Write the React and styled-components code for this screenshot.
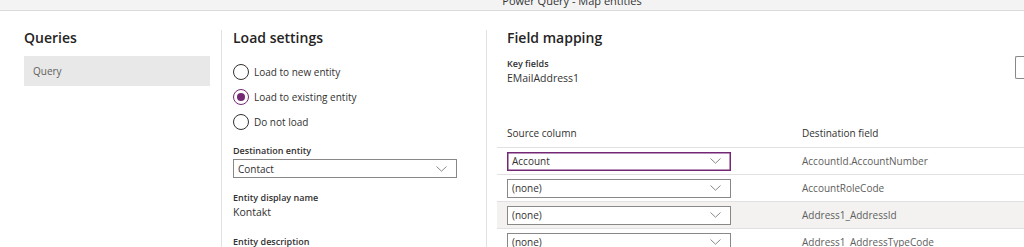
import React from "react";
import styled, { createGlobalStyle } from "styled-components";

const purple = "#742774";

const mappings = [
  { id: 1, source: "Account", dest: "AccountId.AccountNumber", active: true },
  { id: 2, source: "(none)", dest: "AccountRoleCode" },
  { id: 3, source: "(none)", dest: "Address1_AddressId", shaded: true },
  { id: 4, source: "(none)", dest: "Address1_AddressTypeCode" },
];

const loadOptions = [
  { id: 1, label: "Load to new entity" },
  { id: 2, label: "Load to existing entity", checked: true },
  { id: 3, label: "Do not load" },
];

function Chevron() {
  return (
    <svg width="11" height="6" viewBox="0 0 11 6">
      <path d="M0.5 0.5 L5.5 5.2 L10.5 0.5" fill="none" stroke="#8a8886" strokeWidth="1" />
    </svg>
  );
}

export default function App() {
  return (
    <>
      <GlobalStyle />
      <Window>
        <TitleBar>
          <TitleText>Power Query - Map entities</TitleText>
        </TitleBar>
        <Body>
          <QueriesPane>
            <Heading>Queries</Heading>
            <QueryItem>Query</QueryItem>
          </QueriesPane>

          <SettingsPane>
            <Heading>Load settings</Heading>
            <Radios>
              {loadOptions.map((o) => (
                <RadioRow key={o.id}>
                  <RadioCircle $checked={o.checked} />
                  <RadioLabel>{o.label}</RadioLabel>
                </RadioRow>
              ))}
            </Radios>
            <Field $top="14px">
              <FieldLabel>Destination entity</FieldLabel>
              <Select $width="224px">
                <span>Contact</span>
                <Chevron />
              </Select>
            </Field>
            <Field $top="13px" $gap="0px">
              <FieldLabel>Entity display name</FieldLabel>
              <FieldValue>Kontakt</FieldValue>
            </Field>
            <Field $top="15px">
              <FieldLabel>Entity description</FieldLabel>
            </Field>
          </SettingsPane>

          <MappingPane>
            <Heading>Field mapping</Heading>
            <KeyBlock>
              <div>
                <FieldLabel>Key fields</FieldLabel>
                <FieldValue>EMailAddress1</FieldValue>
              </div>
              <EdgeButton />
            </KeyBlock>
            <Table>
              <HeaderRow>
                <HeaderCell>Source column</HeaderCell>
                <HeaderCell>Destination field</HeaderCell>
              </HeaderRow>
              {mappings.map((m) => (
                <Row key={m.id} $shaded={m.shaded}>
                  <Cell>
                    <Select $width="224px" $active={m.active}>
                      <span>{m.source}</span>
                      <Chevron />
                    </Select>
                  </Cell>
                  <DestCell>{m.dest}</DestCell>
                </Row>
              ))}
            </Table>
          </MappingPane>
        </Body>
      </Window>
    </>
  );
}

const GlobalStyle = createGlobalStyle`
  html, body {
    margin: 0;
    padding: 0;
    background: #ffffff;
    font-family: "Open Sans", "Noto Sans", sans-serif;
    color: #323130;
    overflow: hidden;
  }
  * { box-sizing: border-box; }
`;

const Window = styled.div`
  width: 1024px;
  height: 247px;
  overflow: hidden;
  display: flex;
  flex-direction: column;
`;

const TitleBar = styled.div`
  height: 11px;
  flex: none;
  background: #f3f3f3;
  border-bottom: 1px solid #dcdcdc;
  overflow: hidden;
  display: flex;
  justify-content: center;
  padding-left: 120px;
`;

const TitleText = styled.div`
  font-size: 11px;
  line-height: 11px;
  margin-top: -5px;
  color: #333;
`;

const Body = styled.div`
  flex: 1;
  display: grid;
  grid-template-columns: 221px 265px 1fr;
  padding-top: 19px;
`;

const Heading = styled.h2`
  margin: 0;
  font-size: 14px;
  line-height: 16px;
  font-weight: 600;
  color: #252423;
`;

const QueriesPane = styled.div`
  padding: 0 11px 0 24px;
`;

const QueryItem = styled.div`
  margin-top: 10px;
  height: 30px;
  background: #e8e8e8;
  padding-left: 9px;
  display: flex;
  align-items: center;
  font-size: 10px;
  color: #605e5c;
`;

const SettingsPane = styled.div`
  border-left: 1px solid #e1e1e1;
  padding-left: 11px;
`;

const Radios = styled.div`
  margin-top: 18px;
  display: flex;
  flex-direction: column;
  gap: 9px;
`;

const RadioRow = styled.div`
  display: flex;
  align-items: center;
  gap: 5px;
  height: 16px;
`;

const RadioCircle = styled.span`
  width: 16px;
  height: 16px;
  border-radius: 50%;
  border: 1px solid ${(p) => (p.$checked ? purple : "#323130")};
  display: flex;
  align-items: center;
  justify-content: center;
  &::after {
    content: "";
    width: 8px;
    height: 8px;
    border-radius: 50%;
    background: ${(p) => (p.$checked ? purple : "transparent")};
  }
`;

const RadioLabel = styled.span`
  font-size: 10px;
  color: #323130;
`;

const Field = styled.div`
  margin-top: ${(p) => p.$top};
  display: flex;
  flex-direction: column;
  gap: ${(p) => p.$gap || "1px"};
`;

const FieldLabel = styled.div`
  font-size: 9px;
  line-height: 14px;
  font-weight: 600;
  color: #323130;
`;

const FieldValue = styled.div`
  font-size: 10.5px;
  line-height: 15px;
  color: #323130;
`;

const Select = styled.div`
  width: ${(p) => p.$width};
  height: 19px;
  border: 1px solid ${(p) => (p.$active ? purple : "#8a8886")};
  ${(p) => p.$active && "box-shadow: inset 0 0 0 0.5px " + purple + ";"}
  background: #fff;
  display: flex;
  align-items: center;
  justify-content: space-between;
  padding: 0 9px 0 4px;
  font-size: 10px;
  color: #323130;
`;

const MappingPane = styled.div`
  border-left: 1px solid #e1e1e1;
  padding-left: 20px;
`;

const KeyBlock = styled.div`
  margin-top: 11px;
  display: flex;
  justify-content: space-between;
  align-items: flex-start;
`;

const EdgeButton = styled.div`
  width: 9px;
  height: 23px;
  margin-top: -1px;
  border: 1px solid #8a8886;
  border-right: none;
  border-radius: 2px 0 0 2px;
`;

const Table = styled.div`
  margin-top: 33px;
  margin-left: -10px;
`;

const HeaderRow = styled.div`
  display: grid;
  grid-template-columns: 295px 1fr;
  height: 29px;
  align-items: center;
  padding-left: 10px;
  border-bottom: 1px solid #e1e1e1;
`;

const HeaderCell = styled.div`
  font-size: 10px;
  color: #323130;
`;

const Row = styled.div`
  display: grid;
  grid-template-columns: 295px 1fr;
  height: 27px;
  align-items: center;
  padding-left: 10px;
  border-bottom: 1px solid #e1e1e1;
  background: ${(p) => (p.$shaded ? "#f3f2f1" : "transparent")};
`;

const Cell = styled.div`
  display: flex;
  align-items: center;
`;

const DestCell = styled.div`
  font-size: 10px;
  color: #605e5c;
`;
